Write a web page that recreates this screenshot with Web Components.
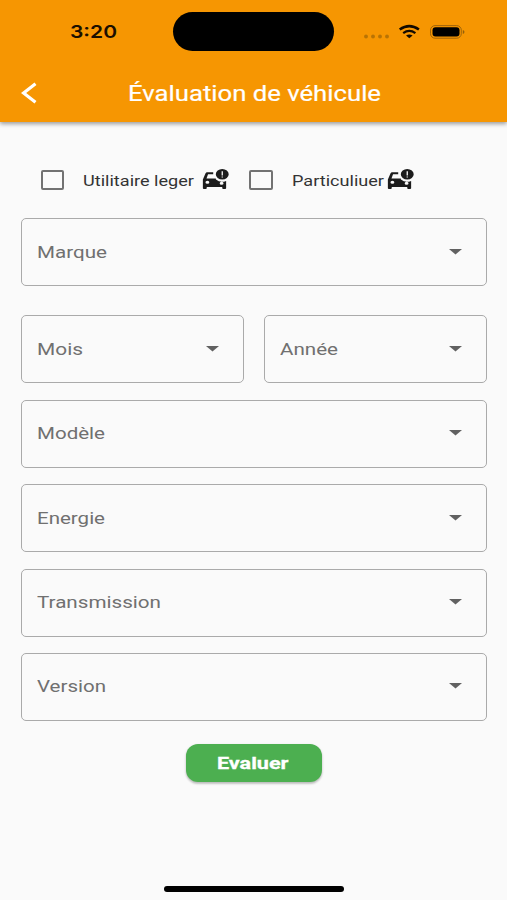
<!DOCTYPE html>
<html lang="fr">
<head>
<meta charset="utf-8">
<title>Évaluation de véhicule</title>
<style>
html,body{margin:0;height:100%;background:#fafafa;font-family:Roboto,"Liberation Sans",sans-serif}
</style>
</head>
<body>
<vehicle-page></vehicle-page>
<script>
const define=(name,html,init)=>{
  const t=document.createElement('template');t.innerHTML=html;
  customElements.define(name,class extends HTMLElement{
    connectedCallback(){
      if(this.shadowRoot)return;
      this.attachShadow({mode:'open'}).append(t.content.cloneNode(true));
      if(init)init(this,this.shadowRoot);
    }
  });
};

/* Stretches a wide-text horizontally to w pixels */
const stretch=(text,w)=>{
  const s=text.shadowRoot.querySelector('span');
  s.style.transform='none';
  text.style.width=w+'px';
  s.style.transform=`scaleX(${w/s.getBoundingClientRect().width})`;
};

define('wide-text',`<style>
:host{display:block;flex:none;white-space:nowrap}
span{display:inline-block;transform-origin:0 50%}
</style><span><slot></slot></span>`,el=>{
  if(el.hasAttribute('w'))stretch(el,+el.getAttribute('w'));
});

define('status-bar',`<style>
:host{display:grid;grid-template-columns:173.4px 160.600px 1fr;height:39px;padding-top:12.400px;align-items:center}
.time{padding-left:69.500px;font:600 17.5px/39px Inter,sans-serif;color:#1b0f00}
.island{height:39px;border-radius:20px;background:#000}
.icons{display:flex;align-items:center;padding-left:29.500px}
svg{display:block;flex:none}
</style>
<wide-text class="time" w="47">3:20</wide-text>
<div class="island"></div>
<div class="icons">
<svg width="104" height="20" viewBox="363 22 104 20">
<g fill="#b87304"><circle cx="366" cy="36.5" r="1.900"/><circle cx="373" cy="36.5" r="1.900"/><circle cx="380" cy="36.5" r="1.900"/><circle cx="387" cy="36.5" r="1.900"/></g>
<g fill="none" stroke="#120a00"><path stroke-width="2.5" d="M399.7 29.6Q409.3 22.6 418.900 29.6"/><path stroke-width="2.3" d="M403.200 33.1Q409.300 28.700 415.400 33.1"/></g>
<path fill="#120a00" d="M406 35.600Q409.300 33.300 412.600 35.600L409.300 38.200Z"/>
<rect x="430.500" y="25.600" width="30.800" height="12.600" rx="4.500" fill="none" stroke="#a0650a"/>
<rect x="432.500" y="27.200" width="27" height="9.400" rx="3" fill="#000"/>
<path d="M462.800 30v4q1.700-.7 1.700-2t-1.700-2" fill="#94600a"/>
</svg></div>`);

define('app-header',`<style>
:host{display:block;height:122px;background:#f69602;box-shadow:0 2px 4px rgba(0,0,0,.28),0 1px 5px rgba(0,0,0,.16)}
.bar{display:flex;align-items:center;height:56px;margin-top:14px;padding-left:20px}
svg{display:block;flex:none;margin:-1px 87.500px 0 0}
wide-text{font-size:21.2px;font-weight:400;line-height:57px;color:#fff;padding-top:1px;-webkit-text-stroke:.2px #fff}
</style>
<status-bar></status-bar>
<div class="bar"><svg width="20" height="24" viewBox="0 0 20 24"><path d="M15.500 2.700L3.600 12L15.500 21.300" fill="none" stroke="#fff" stroke-width="3.200"/></svg>
<wide-text w="253"><slot></slot></wide-text></div>`);

define('car-crash-icon',`<style>:host{display:block;flex:none}svg{display:block}</style>
<svg width="31" height="25.300" viewBox="0 0 24 24" preserveAspectRatio="none"><path fill="#1c1c1c" fill-rule="evenodd" d="M18 1a5 5 0 1 0 0 10a5 5 0 1 0 0-10ZM18.500 9h-1V8h1ZM18.500 7h-1V3h1ZM6.500 4C5.840 4 5.290 4.420 5.080 5.010L3 11v8c0 .55.450 1 1 1h1c.55 0 1-.450 1-1v-1h12v1c0 .55.450 1 1 1h1c.55 0 1-.450 1-1v-6.680A7 7 0 0 1 13.110 11L13 10H5.810L7 5.900H11V4ZM6.500 12a1.500 1.500 0 1 1 0 3a1.500 1.500 0 1 1 0-3ZM17.500 12.980A1.500 1.500 0 1 1 16 14.500Q16 13 17.500 12.980Z"/></svg>`);

define('check-option',`<style>
:host{display:flex;align-items:center;height:26px}
i{flex:none;box-sizing:border-box;width:23.500px;height:19.500px;border:2px solid #727272;border-radius:2px;margin-right:19px}
wide-text{font-size:14.800px;line-height:26px;color:#333;padding-top:2px}
car-crash-icon{margin-left:var(--icon-gap,5px);margin-top:1.500px}
</style><i></i><wide-text><slot></slot></wide-text><car-crash-icon></car-crash-icon>`);

define('select-field',`<style>
:host{display:flex;box-sizing:border-box;height:68px;border:1px solid #aaa;border-radius:5px;align-items:center;justify-content:space-between;padding:0 24px 1px 15px}
wide-text{font-size:16.900px;line-height:24px;color:#707070}
svg{display:block}
</style><wide-text><slot></slot></wide-text>
<svg width="13" height="6" viewBox="0 0 13 6"><path d="M0 0H13L6.500 5.600Z" fill="#616161"/></svg>`);

define('primary-button',`<style>
:host{display:flex;justify-content:center;align-items:center;width:136px;height:38px;border-radius:12px;background:#4caf50;box-shadow:0 2px 2px rgba(0,0,0,.16),0 1px 3px rgba(0,0,0,.14)}
wide-text{font-size:16.500px;line-height:38px;font-weight:700;color:#fff;padding-top:2px;margin-right:2px;-webkit-text-stroke:.3px #fff}
</style><wide-text w="71.500"><slot></slot></wide-text>`);

define('vehicle-page',`<style>
:host{display:flex;flex-direction:column;height:900px;overflow:hidden}
.options{display:flex;padding:45px 0 0 40.500px;height:51px}
.options check-option:first-child{width:208.700px;--icon-gap:5px}
.options check-option:last-child{--icon-gap:.6px}
form{display:grid;grid-template-columns:1fr 1fr;column-gap:20px;row-gap:16.400px;padding:0 20.500px 0 21.200px}
.full{grid-column:1/-1}
.first{margin-bottom:13px}
primary-button{margin:23px 0 0 186px}
.home{width:180px;height:5.500px;border-radius:3px;background:#000;margin:auto auto 8.500px 164px}
</style>
<app-header>Évaluation de véhicule</app-header>
<div class="options"><check-option w="111">Utilitaire leger</check-option><check-option w="92">Particuliuer</check-option></div>
<form>
<select-field class="full first" w="70">Marque</select-field>
<select-field w="46">Mois</select-field><select-field w="58">Année</select-field>
<select-field class="full" w="68">Modèle</select-field>
<select-field class="full" w="68">Energie</select-field>
<select-field class="full" w="124">Transmission</select-field>
<select-field class="full" w="69">Version</select-field>
</form>
<primary-button>Evaluer</primary-button>
<div class="home"></div>`,(el,root)=>{
  /* Passes the w attribute of each labelled control down to its text */
  for(const c of root.querySelectorAll('[w]'))
    stretch(c.shadowRoot.querySelector('wide-text'),+c.getAttribute('w'));
});
</script>
</body>
</html>
